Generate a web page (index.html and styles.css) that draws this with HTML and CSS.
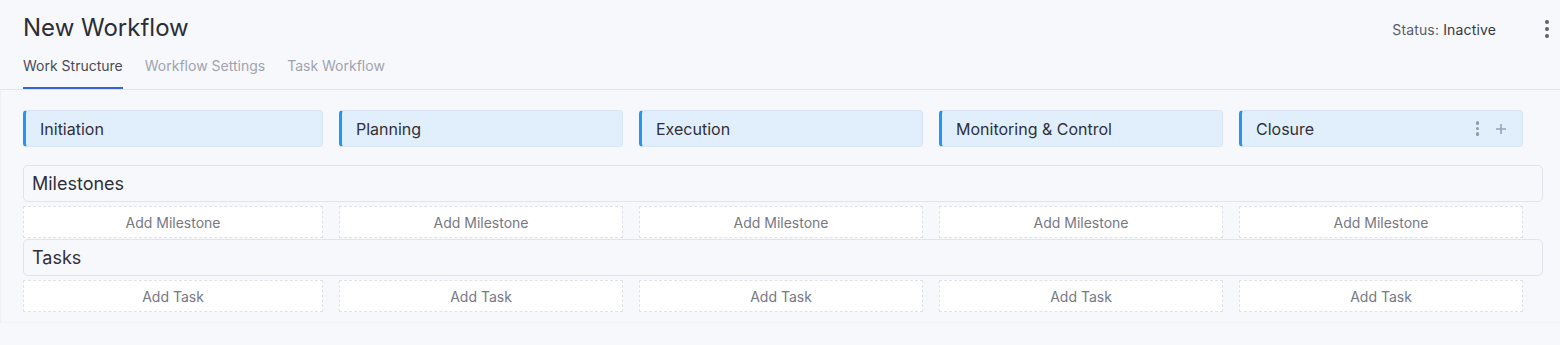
FILE: index.html
```html
<!DOCTYPE html>
<html lang="en">
<head>
<meta charset="utf-8">
<title>New Workflow</title>
<link rel="stylesheet" href="styles.css">
</head>
<body>
<div class="page">
  <header class="header">
    <div class="header-left">
      <h1 class="title">New Workflow</h1>
      <nav class="tabs">
        <a class="tab active">Work Structure</a>
        <a class="tab">Workflow Settings</a>
        <a class="tab">Task Workflow</a>
      </nav>
    </div>
    <div class="header-right">
      <span class="status"><span class="status-label">Status:</span> Inactive</span>
      <span class="kebab kebab-dark"><i></i><i></i><i></i></span>
    </div>
  </header>
  <main class="content">
    <div class="grid">
      <div class="phase"><span>Initiation</span></div>
      <div class="phase"><span>Planning</span></div>
      <div class="phase"><span>Execution</span></div>
      <div class="phase"><span>Monitoring &amp; Control</span></div>
      <div class="phase"><span>Closure</span>
        <span class="phase-actions">
          <span class="kebab kebab-light"><i></i><i></i><i></i></span>
          <svg class="plus" width="12" height="12" viewBox="0 0 12 12"><path d="M6 1v10M1 6h10" stroke="#94a3ba" stroke-width="1.6" fill="none"/></svg>
        </span>
      </div>
    </div>
    <div class="section-row">Milestones</div>
    <div class="grid add-grid">
      <div class="add-box">Add Milestone</div>
      <div class="add-box">Add Milestone</div>
      <div class="add-box">Add Milestone</div>
      <div class="add-box">Add Milestone</div>
      <div class="add-box">Add Milestone</div>
    </div>
    <div class="section-row">Tasks</div>
    <div class="grid add-grid">
      <div class="add-box">Add Task</div>
      <div class="add-box">Add Task</div>
      <div class="add-box">Add Task</div>
      <div class="add-box">Add Task</div>
      <div class="add-box">Add Task</div>
    </div>
  </main>
</div>
</body>
</html>
```
FILE: styles.css
```css
* { box-sizing: border-box; }
html, body {
  margin: 0;
  background: #f7f8fc;
  font-family: Inter, "Noto Sans", sans-serif;
  color: #2e2f38;
}
.page {
  width: 1560px;
  height: 345px;
}
.header {
  display: flex;
  justify-content: space-between;
  padding: 0 0 0 23px;
  border-bottom: 1px solid #e3e5ec;
}
.title {
  margin: 0;
  padding-top: 12px;
  font-size: 24px;
  line-height: 32px;
  font-weight: 400;
  color: #2c2d36;
}
.tabs {
  display: flex;
  gap: 22px;
  margin-top: 12px;
}
.tab {
  font-size: 14px;
  line-height: 20px;
  padding-bottom: 11px;
  color: #9ea3b0;
  border-bottom: 2px solid transparent;
  cursor: pointer;
}
.tab.active {
  color: #4a4b55;
  border-bottom-color: #3562e0;
}
.header-right {
  display: flex;
  align-items: center;
  height: 58px;
}
.status {
  font-size: 14px;
  letter-spacing: 0.15px;
  color: #363740;
  margin-right: 49px;
}
.status-label { color: #5b5d66; }
.kebab {
  display: inline-flex;
  flex-direction: column;
  gap: 3px;
}
.kebab i {
  display: block;
  width: 4px;
  height: 4px;
  border-radius: 50%;
}
.kebab-dark { margin-right: 11px; }
.kebab-dark i { background: #5f6068; }
.kebab-light { gap: 2px; }
.kebab-light i { width: 3.5px; height: 3.5px; background: #8f99a8; }
.content {
  padding: 20px 17px 0 22px;
  width: 1560px;
  height: 233px;
  border-left: 1px solid #eef0f5;
  border-bottom: 1px solid #f1f2f7;
}
.grid {
  display: grid;
  grid-template-columns: repeat(5, 300px);
}
.grid > * + * { margin-left: 16px; }
.phase {
  height: 37px;
  display: flex;
  align-items: center;
  justify-content: space-between;
  background: #e1eefc;
  border: 1px solid #dae5f3;
  border-left: 3px solid #2196f3;
  border-radius: 4px;
  padding: 0 15px 0 14px;
  font-size: 16px;
  color: #2f3039;
}
.phase-actions {
  display: flex;
  align-items: center;
  gap: 16px;
}
.plus { display: block; }
.section-row {
  margin-top: 18px;
  width: 1520px;
  height: 37px;
  display: flex;
  align-items: center;
  padding-left: 8px;
  border: 1px solid #e2e4ec;
  border-radius: 5px;
  font-size: 18px;
  color: #2f3039;
}
.add-grid { margin-top: 4px; }
.add-grid + .section-row { margin-top: 1px; }
.add-box {
  height: 32px;
  display: flex;
  align-items: center;
  justify-content: center;
  background: #ffffff;
  border: 1px dashed #dfe2ea;
  font-size: 14px;
  color: #767884;
}
```
